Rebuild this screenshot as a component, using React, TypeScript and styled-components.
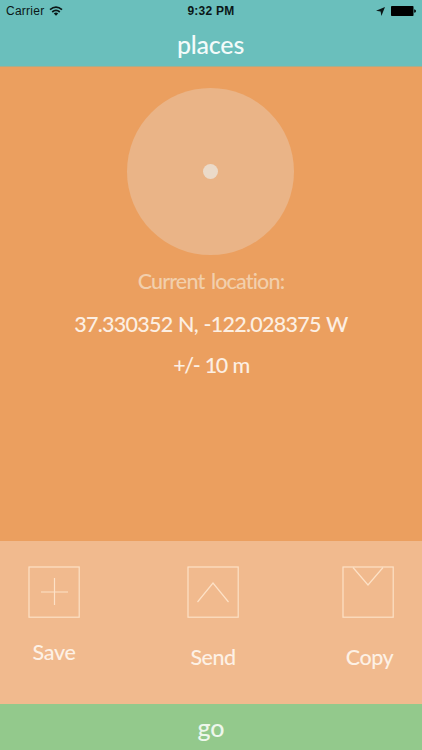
import React from "react";
import styled, { createGlobalStyle } from "styled-components";

const GlobalStyle = createGlobalStyle`
  html, body { margin: 0; padding: 0; }
  body { overflow: hidden; }
  * { box-sizing: border-box; }
`;

const Screen = styled.div`
  width: 422px;
  height: 750px;
  display: flex;
  flex-direction: column;
  background: #eb9f5f;
  color: #fcefe3;
  font-family: Futura, Lato, sans-serif;
  font-weight: 500;
  font-variant-ligatures: none;
`;

const Header = styled.header`
  height: 67px;
  flex: none;
  background: #6abfbc;
  border-bottom: 1px solid #a9ad8c;
`;

const StatusBar = styled.div`
  height: 22px;
  display: grid;
  grid-template-columns: 1fr auto 1fr;
  align-items: center;
  padding: 0 6px 0 6px;
  color: #0b1717;
  font: 12px/22px "Liberation Sans", Arial, sans-serif;
`;

const Carrier = styled.div`
  display: flex;
  align-items: center;
  gap: 5px;
  letter-spacing: 0.25px;
`;

const Clock = styled.div`
  font-weight: 700;
  letter-spacing: 0.25px;
`;

const Indicators = styled.div`
  display: flex;
  align-items: center;
  justify-content: flex-end;
  gap: 6px;
`;

const Label = styled.div<{ $size?: number; $spacing?: number; $word?: number; $top?: number; $left?: number }>`
  margin-top: ${(p) => p.$top ?? 0}px;
  padding-left: ${(p) => p.$left ?? 0}px;
  font-size: ${(p) => p.$size ?? 21.5}px;
  line-height: 24px;
  letter-spacing: ${(p) => p.$spacing ?? 0}px;
  word-spacing: ${(p) => p.$word ?? 0}px;
  text-align: center;
  white-space: pre;
`;

const Title = styled(Label)`
  padding-right: 1px;
  color: #f3fbfa;
`;

const Caption = styled(Label)`
  color: #f2cfac;
`;

const Main = styled.main`
  flex: 1;
  display: flex;
  flex-direction: column;
  align-items: center;
  padding-top: 21px;
`;

const Radar = styled.div`
  width: 167px;
  height: 167px;
  flex: none;
  margin-right: 1px;
  border-radius: 50%;
  background: #eab487;
  display: flex;
  align-items: center;
  justify-content: center;
`;

const Dot = styled.div`
  width: 15px;
  height: 15px;
  border-radius: 50%;
  background: #ebdac9;
`;

const Actions = styled.nav`
  height: 163px;
  flex: none;
  display: grid;
  grid-template-columns: 52px 52px 52px;
  column-gap: 106px;
  padding: 25px 0 0 28px;
  background: #f1ba8e;

  & > :nth-child(2) { margin-left: 1px; }
  & > :nth-child(3) { margin-left: -2px; }
`;

const Action = styled.button`
  width: 52px;
  display: flex;
  flex-direction: column;
  align-items: center;
  padding: 0;
  border: 0;
  background: none;
  color: #fdf1e5;
  font-family: inherit;
  font-weight: inherit;
  font-variant-ligatures: inherit;
`;

const ActionIcon = styled.svg`
  width: 52px;
  height: 52px;
  flex: none;
  fill: none;
  stroke: #fde1c6;
  stroke-width: 1.2;
`;

const Go = styled.footer`
  height: 46px;
  flex: none;
  background: #93c98c;
  color: #eef7ec;
`;

const actions = [
  { name: "Save", glyph: "M13 26H40 M26.5 12V39", top: 22, left: 0, spacing: -0.35 },
  { name: "Send", glyph: "M10.5 36 L26 17 L41.5 36", top: 27, left: 0, spacing: -0.5 },
  { name: "Copy", glyph: "M11 1.5 L26 19 L41 1.5", top: 27, left: 3, spacing: -0.5 },
];

export default function App() {
  return (
    <Screen>
      <GlobalStyle />
      <Header>
        <StatusBar>
          <Carrier>
            Carrier
            <svg width="14" height="10" viewBox="0 0 14 10" fill="none" stroke="#0b1717" strokeWidth="1.7">
              <path d="M1 3.7 Q7 -1.5 13 3.7 M3.2 6 Q7 2.7 10.8 6" />
              <path d="M4.8 7.5 Q7 5.6 9.2 7.5 L7 9.8Z" fill="#0b1717" stroke="none" />
            </svg>
          </Carrier>
          <Clock>9:32 PM</Clock>
          <Indicators>
            <svg width="9" height="9" viewBox="0 0 9 9" fill="#0b1717">
              <path d="M9 0 L5.4 9 L4.6 4.6 L0 3.8Z" />
            </svg>
            <svg width="25" height="10" viewBox="0 0 25 10" fill="#000">
              <rect width="22.5" height="10" rx="0.8" />
              <path d="M23.2 3.2 Q25 3.6 25 5 Q25 6.4 23.2 6.8Z" />
            </svg>
          </Indicators>
        </StatusBar>
        <Title $size={25} $spacing={-0.2} $top={10}>places</Title>
      </Header>
      <Main>
        <Radar>
          <Dot />
        </Radar>
        <Caption $top={14} $spacing={-0.85} $word={2}>Current location:</Caption>
        <Label $top={19} $spacing={-0.75} $word={1}>37.330352 N, -122.028375 W</Label>
        <Label $top={17} $spacing={-1.4} $word={1.5}>+/- 10 m</Label>
      </Main>
      <Actions>
        {actions.map((a) => (
          <Action key={a.name}>
            <ActionIcon viewBox="0 0 52 52">
              <rect x="1" y="1" width="50.2" height="50.2" />
              <path d={a.glyph} />
            </ActionIcon>
            <Label $top={a.top} $left={a.left} $spacing={a.spacing}>{a.name}</Label>
          </Action>
        ))}
      </Actions>
      <Go>
        <Label $size={25} $top={11}>go</Label>
      </Go>
    </Screen>
  );
}
